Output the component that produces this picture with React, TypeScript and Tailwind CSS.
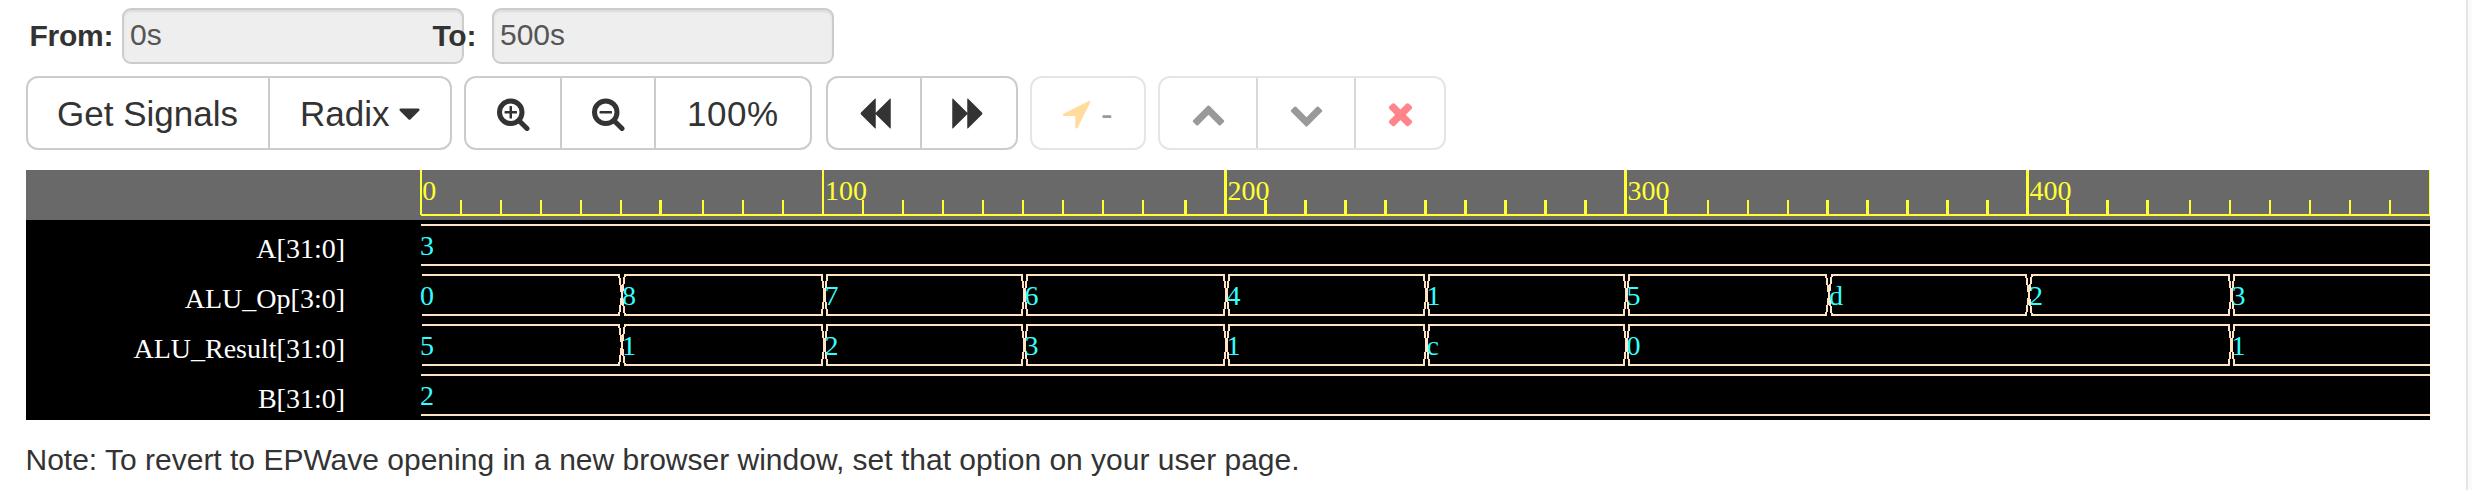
import type { ReactNode } from "react";

const ICONS = {
  caret:
    "M1408 704q0 26-19 45l-448 448q-19 19-45 19t-45-19l-448-448q-19-19-19-45t19-45 45-19h896q26 0 45 19t19 45z",
  backward:
    "M1683 141q19-19 32-13t13 32v1472q0 26-13 32t-32-13l-710-710q-9-9-13-19v710q0 26-13 32t-32-13l-710-710q-19-19-19-45t19-45l710-710q19-19 32-13t13 32v710q4-10 13-19z",
  forward:
    "M109 1651q-19 19-32 13t-13-32v-1472q0-26 13-32t32 13l710 710q9 9 13 19v-710q0-26 13-32t32 13l710 710q19 19 19 45t-19 45l-710 710q-19 19-32 13t-13-32v-710q-4 10-13 19z",
  location:
    "M1593 349l-640 1280q-17 35-57 35-5 0-15-2-22-5-35.5-22.5t-13.5-39.5v-576h-576q-22 0-39.5-13.5t-22.5-35.5 4-42 29-30l1280-640q13-7 29-7 27 0 45 19 15 14 18.5 34.5t-6.5 39.5z",
  up: "M1683 1331l-166 165q-19 19-45 19t-45-19l-531-531-531 531q-19 19-45 19t-45-19l-166-165q-19-19-19-45.5t19-45.5l742-741q19-19 45-19t45 19l742 741q19 19 19 45.5t-19 45.5z",
  down: "M1683 808l-742 741q-19 19-45 19t-45-19l-742-741q-19-19-19-45.5t19-45.5l166-165q19-19 45-19t45 19l531 531 531-531q19-19 45-19t45 19l166 165q19 19 19 45.5t-19 45.5z",
  remove:
    "M1490 1322q0 40-28 68l-136 136q-28 28-68 28t-68-28l-294-294-294 294q-28 28-68 28t-68-28l-136-136q-28-28-28-68t28-68l294-294-294-294q-28-28-28-68t28-68l136-136q28-28 68-28t68 28l294 294 294-294q28-28 68-28t68 28l136 136q28 28 28 68t-28 68l-294 294 294 294q28 28 28 68z",
};

function Icon({ name, className = "" }: { name: keyof typeof ICONS; className?: string }) {
  return (
    <svg viewBox="0 0 1792 1792" className={`size-[35px] shrink-0 fill-current ${className}`}>
      <path d={ICONS[name]} />
    </svg>
  );
}

function Magnifier({ plus = false }: { plus?: boolean }) {
  return (
    <svg viewBox="0 0 1792 1792" className="size-[35px] shrink-0">
      <circle cx="704" cy="832" r="576" fill="none" stroke="currentColor" strokeWidth="256" />
      <path d="M1160 1288L1536 1664" stroke="currentColor" strokeWidth="256" strokeLinecap="round" />
      <rect x="384" y="768" width="640" height="128" rx="32" fill="currentColor" />
      {plus && <rect x="640" y="512" width="128" height="640" rx="32" fill="currentColor" />}
    </svg>
  );
}

function Group({ children, className }: { children: ReactNode; className: string }) {
  return (
    <div className={`flex h-[74px] shrink-0 overflow-hidden rounded-[12px] border-2 bg-white ${className}`}>
      {children}
    </div>
  );
}

function Segment({ children, className }: { children: ReactNode; className: string }) {
  return <button className={`flex shrink-0 items-center whitespace-nowrap text-left ${className}`}>{children}</button>;
}

// Ruler ticks as [x, width]; every tenth one is a major tick.
const TICKS: [number, number][] = [
  [420, 2], [460, 2], [500, 2], [540, 2], [580, 2], [620, 2], [659, 3], [702, 2], [742, 2], [782, 2],
  [822, 2], [862, 2], [902, 2], [942, 2], [982, 2], [1022, 2], [1062, 2], [1102, 2], [1142, 2], [1184, 3],
  [1224, 3], [1264, 3], [1304, 3], [1344, 3], [1384, 3], [1424, 3], [1464, 3], [1504, 3], [1544, 3], [1584, 3],
  [1624, 3], [1664, 3], [1707, 2], [1747, 2], [1787, 2], [1826, 3], [1866, 3], [1906, 3], [1946, 3], [1986, 3],
  [2026, 3], [2066, 3], [2106, 3], [2146, 3], [2189, 2], [2229, 2], [2269, 2], [2309, 2], [2349, 2], [2389, 2],
  [2429, 2],
];

const RULER_LABELS: [number, string][] = [
  [422.3, "0"], [825, "100"], [1227.5, "200"], [1627.5, "300"], [2029.6, "400"],
];

// Each signal lists its changes as [x, value].
const SIGNALS: { name: string; values: [number, string][] }[] = [
  { name: "A[31:0]", values: [[420, "3"]] },
  {
    name: "ALU_Op[3:0]",
    values: [
      [420, "0"], [622, "8"], [824.5, "7"], [1024.5, "6"], [1226.5, "4"],
      [1426.5, "1"], [1626.5, "5"], [1829, "d"], [2029, "2"], [2231.5, "3"],
    ],
  },
  {
    name: "ALU_Result[31:0]",
    values: [
      [420, "5"], [622, "1"], [824.5, "2"], [1024.5, "3"], [1226.5, "1"],
      [1426.5, "c"], [1626.5, "0"], [2231.5, "1"],
    ],
  },
  { name: "B[31:0]", values: [[420, "2"]] },
];

function Ruler() {
  return (
    <svg viewBox="420 0 2010 50" className="h-[50px] w-[2010px] shrink-0 fill-[#ffff33]">
      <g shapeRendering="crispEdges">
        {TICKS.map(([x, w], i) => (
          <rect key={x} x={x} y={i % 10 ? 30 : 0} width={w} height={i % 10 ? 15 : 45} />
        ))}
        <rect x="421" y="44" width="2009" height="2" />
      </g>
      {RULER_LABELS.map(([x, label]) => (
        <text key={x} x={x} y="30" className="text-[28px]">
          {label}
        </text>
      ))}
    </svg>
  );
}

function Wave({ values }: { values: [number, string][] }) {
  const start = values.length > 1 ? 422 : 421;
  return (
    <svg viewBox="420 0 2010 50" className="h-[50px] w-[2010px] shrink-0">
      <g shapeRendering="crispEdges" fill="none" stroke="#ffe4c4" strokeWidth="2">
        {values.map(([x], i) => {
          const from = i ? x + 3 : start;
          const to = i + 1 < values.length ? values[i + 1][0] - 2 : 2430;
          return (
            <g key={x}>
              <path d={`M${from} 5H${to}M${from} 45H${to}`} />
              {i > 0 && <path d={`M${x - 3} 4L${x + 3} 46M${x + 3} 4L${x - 3} 46`} />}
            </g>
          );
        })}
      </g>
      {values.map(([x, value]) => (
        <text key={x} x={x} y="35" className="fill-[#33ffff] text-[28px]">
          {value}
        </text>
      ))}
    </svg>
  );
}

function TimeField({ value }: { value: string }) {
  return (
    <input
      readOnly
      value={value}
      className="h-14 w-[342px] shrink-0 rounded-[9px] border-2 border-[#ccc] bg-[#eee] pb-[2px] pl-[6px] text-[30px] text-[#555] shadow-[inset_0_2px_2px_rgba(0,0,0,0.075)] outline-none"
    />
  );
}

export default function App() {
  return (
    <div className="flex h-[490px] w-[2472px] overflow-hidden bg-white font-['Liberation_Sans',Arial,sans-serif] text-[#333]">
      <main className="flex w-[2466px] shrink-0 flex-col pl-[26px] pt-2">
        <div className="flex h-14 items-center text-[30px]">
          <label className="w-[96px] shrink-0 pb-[2px] pl-[3.5px] font-bold tracking-[-0.25px]">From:</label>
          <TimeField value="0s" />
          <label className="relative z-10 -ml-[32px] w-[60px] shrink-0 pb-[2px] pl-[0.5px] font-bold tracking-[-0.25px]">
            To:
          </label>
          <TimeField value="500s" />
        </div>

        <div className="mt-3 flex text-[35px] leading-[40px]">
          <Group className="w-[426px] border-[#ccc]">
            <Segment className="w-[242px] border-r-2 border-[#ccc] pl-[29px]">
              <span className="pt-[2px]">Get Signals</span>
            </Segment>
            <Segment className="pl-[30px]">
              <span className="pt-[2px]">Radix</span>
              <Icon name="caret" className="ml-[2.5px]" />
            </Segment>
          </Group>
          <Group className="ml-3 w-[348px] border-[#ccc]">
            <Segment className="w-[96px] border-r-2 border-[#ccc] pl-[31px]">
              <Magnifier plus />
            </Segment>
            <Segment className="w-[94px] border-r-2 border-[#ccc] pl-[30px]">
              <Magnifier />
            </Segment>
            <Segment className="pl-[31px] tracking-[0.5px]">
              <span className="pt-[2px]">100%</span>
            </Segment>
          </Group>
          <Group className="ml-[14px] w-[192px] border-[#ccc]">
            <Segment className="w-[94px] border-r-2 border-[#ccc] pl-[28.5px]">
              <Icon name="backward" />
            </Segment>
            <Segment className="pl-[29px]">
              <Icon name="forward" />
            </Segment>
          </Group>
          <Group className="ml-3 w-[116px] border-[#e5e5e5] text-[#999]">
            <Segment className="pl-[27px]">
              <Icon name="location" className="text-[#ffdb9d]" />
              <span className="ml-[7px] pt-[2px]">-</span>
            </Segment>
          </Group>
          <Group className="ml-3 w-[288px] border-[#e5e5e5] text-[#999]">
            <Segment className="w-[98px] border-r-2 border-[#d8d8d8] pl-[31px]">
              <Icon name="up" />
            </Segment>
            <Segment className="w-[98px] border-r-2 border-[#d8d8d8] pl-[31px]">
              <Icon name="down" />
            </Segment>
            <Segment className="pl-[26.5px]">
              <Icon name="remove" className="text-[#ff858a]" />
            </Segment>
          </Group>
        </div>

        <section className="mt-5 flex h-[250px] w-[2404px] flex-col bg-black font-['Liberation_Serif','Times_New_Roman',serif]">
          <div className="flex justify-end bg-[#696969]">
            <Ruler />
          </div>
          {SIGNALS.map(({ name, values }) => (
            <div key={name} className="flex h-[50px]">
              <div className="w-[394px] shrink-0 pr-[75px] pt-1 text-right text-[28px] leading-[50px] text-white">
                {name}
              </div>
              <Wave values={values} />
            </div>
          ))}
        </section>

        <p className="-ml-[0.5px] mt-[22px] text-[30px] leading-9">
          Note: To revert to EPWave opening in a new browser window, set that option on your user page.
        </p>
      </main>
      <aside className="w-[6px] shrink-0 border-l-2 border-[#e5e5e5] bg-[#fafafa]" />
    </div>
  );
}
